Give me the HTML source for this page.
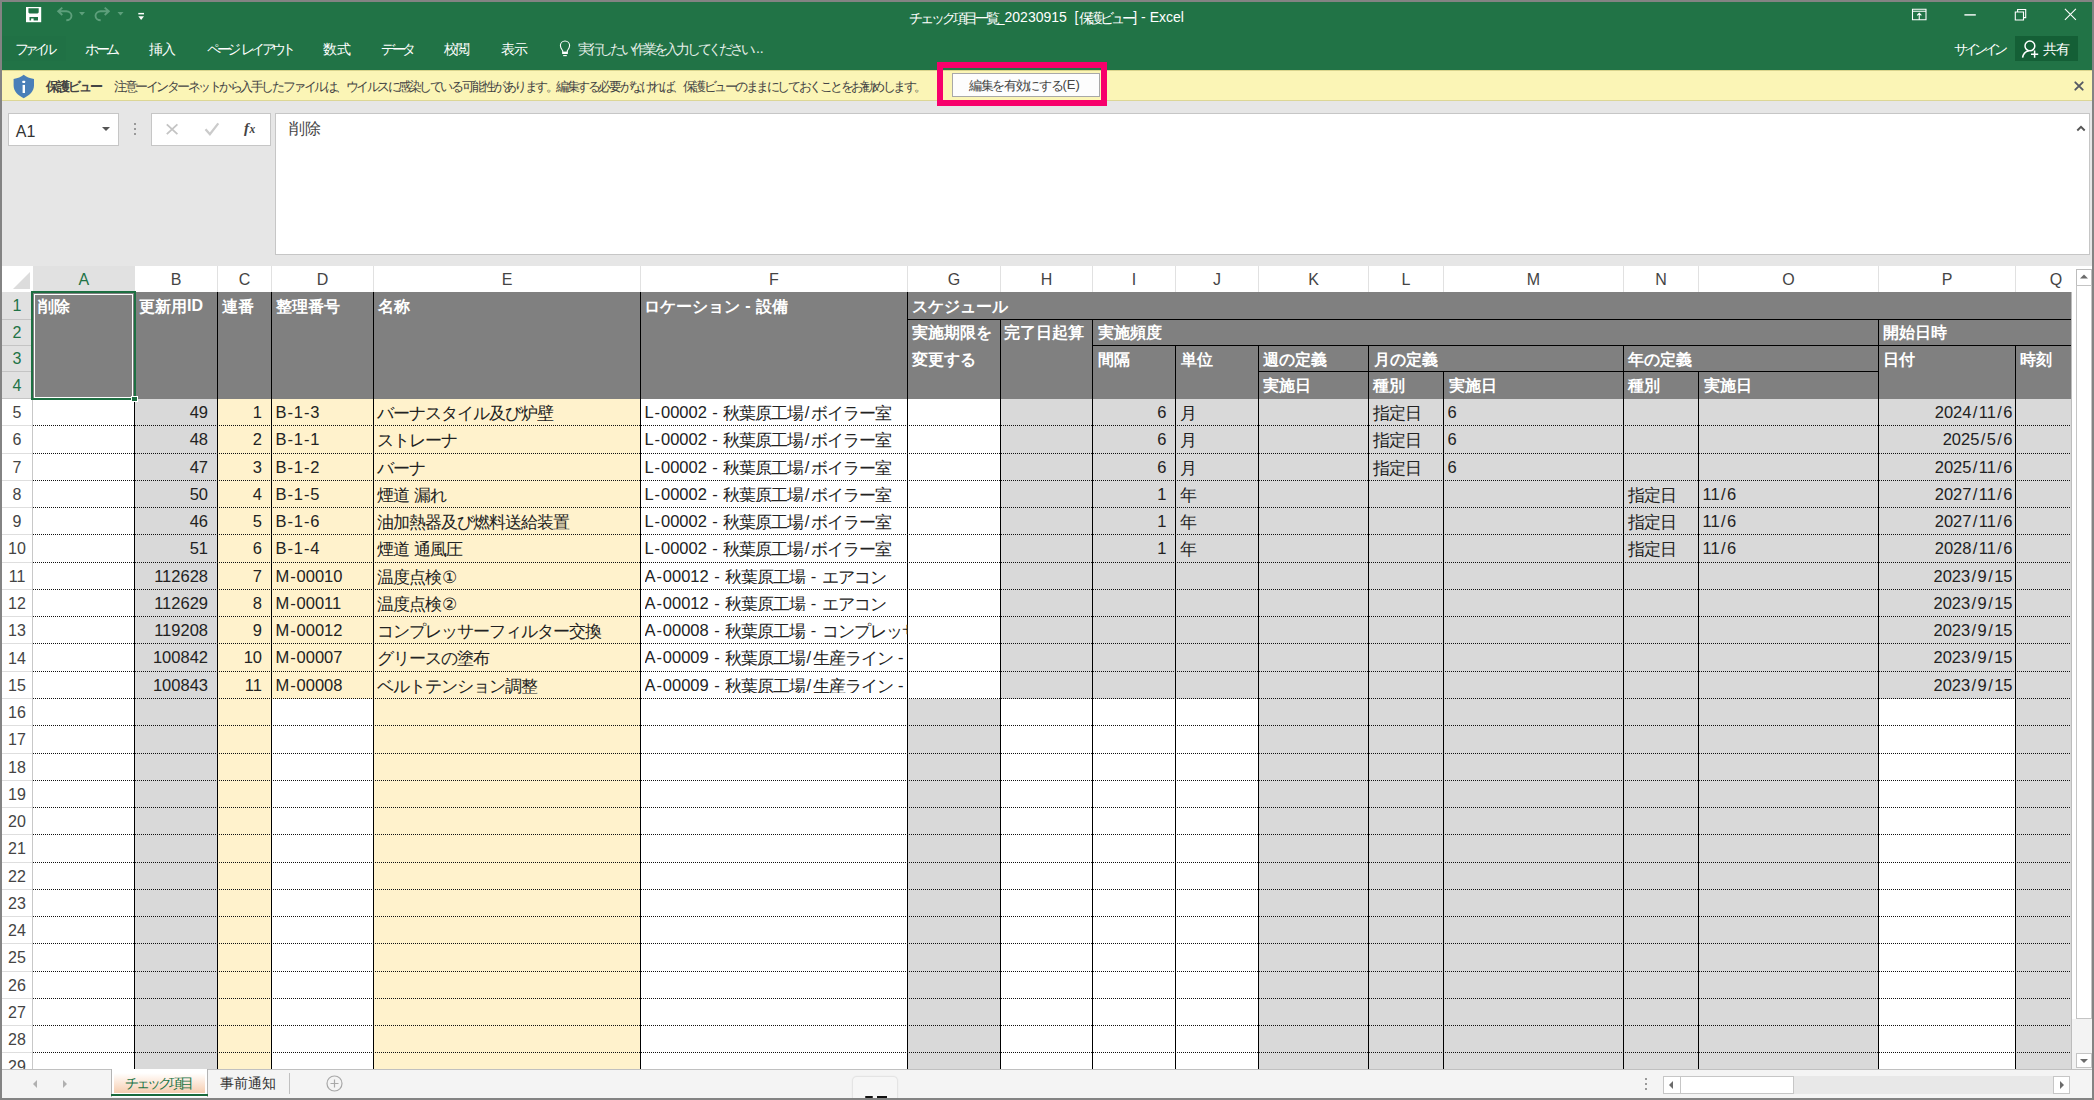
<!DOCTYPE html><html><head><meta charset="utf-8"><style>
html,body{margin:0;padding:0}
body{width:2094px;height:1100px;position:relative;overflow:hidden;background:#838383;font-family:"Liberation Sans", sans-serif}
div{position:absolute;box-sizing:border-box}
.t{white-space:nowrap;line-height:1}
c{display:inline-block;width:var(--cw);text-align:center;position:relative;top:0.06em}
.tofu c{transform:scale(var(--sx),1.18);-webkit-text-stroke:0.3px}
.h{padding:0 0.9px}
.s{padding:0 1.4px}
svg{position:absolute}

</style></head><body>
<div style="left:2px;top:2px;width:2090px;height:68px;background:#217346"></div>
<svg style="left:20px;top:2px" width="130" height="28" viewBox="0 0 130 28">
<rect x="6" y="5" width="15.2" height="15.2" fill="#fff"/>
<path d="M8.4 6.2H18.7V10.4L17.6 11.4H9.5L8.4 10.4Z" fill="#217346"/>
<path d="M9.5 14.9H18V18.6H13.6V16.6H11.1V18.6H9.5Z" fill="#217346"/>
<path d="M42.3 5.6L38.2 9.3L42.3 13 M38.8 9.3H46.3A5.2 4.5 0 0 1 46.3 18.3" fill="none" stroke="#5d9f7b" stroke-width="1.9"/>
<path d="M59 10H65L62 13.4Z" fill="#5d9f7b"/>
<path d="M84.7 5.6L88.8 9.3L84.7 13 M88.2 9.3H80.7A5.2 4.5 0 0 0 80.7 18.3" fill="none" stroke="#5d9f7b" stroke-width="1.9"/>
<path d="M97.5 10H103.5L100.5 13.4Z" fill="#5d9f7b"/>
<rect x="118.3" y="10.9" width="5.7" height="1.5" fill="#fff"/>
<path d="M118.3 14.2H124L121.15 17.9Z" fill="#fff"/>
</svg>
<div class="t" style="left:909.00px;top:9.96px;font-size:14px;color:#fff;--cw:10.976px;--sx:1.21;"><c>チ</c><c>ェ</c><c>ッ</c><c>ク</c><c>項</c><c>目</c><c>一</c><c>覧</c>_20230915  [<c>保</c><c>護</c><c>ビ</c><c>ュ</c><c>ー</c>] - Excel</div>
<svg style="left:1900px;top:0px" width="190" height="30" viewBox="0 0 190 30"><path d="M12.5 9.3h13.5v10.4h-13.5z M12.5 11.2h13.5 M19.25 19.7v-6.3 M17.1 15.4l2.15-2.1 2.15 2.1" fill="none" stroke="#fff" stroke-width="1.1"/><path d="M64.4 14.9h11.4" stroke="#fff" stroke-width="1.4"/><path d="M115.3 12h8.2v8h-8.2z M117.6 12v-2.5h8.1v8.1h-2.2" fill="none" stroke="#fff" stroke-width="1.1"/><path d="M164.9 8.9l11 11 M175.9 8.9l-11 11" stroke="#fff" stroke-width="1.1"/></svg>
<div style="left:2px;top:36px;width:64px;height:25px;background:#207145"></div>
<div class="t" style="left:15.00px;top:40.95px;font-size:14px;color:#fff;--cw:9.250px;--sx:1.02;"><c>フ</c><c>ァ</c><c>イ</c><c>ル</c></div>
<div class="t" style="left:85.00px;top:40.95px;font-size:14px;color:#fff;--cw:10.667px;--sx:1.18;"><c>ホ</c><c>ー</c><c>ム</c></div>
<div class="t" style="left:149.00px;top:40.95px;font-size:14px;color:#fff;--cw:13.000px;--sx:1.44;"><c>挿</c><c>入</c></div>
<div class="t" style="left:207.00px;top:40.95px;font-size:14px;color:#fff;--cw:10.139px;--sx:1.12;"><c>ペ</c><c>ー</c><c>ジ</c> <c>レ</c><c>イ</c><c>ア</c><c>ウ</c><c>ト</c></div>
<div class="t" style="left:323.00px;top:40.95px;font-size:14px;color:#fff;--cw:13.500px;--sx:1.49;"><c>数</c><c>式</c></div>
<div class="t" style="left:381.00px;top:40.95px;font-size:14px;color:#fff;--cw:10.667px;--sx:1.18;"><c>デ</c><c>ー</c><c>タ</c></div>
<div class="t" style="left:443.50px;top:40.95px;font-size:14px;color:#fff;--cw:12.750px;--sx:1.41;"><c>校</c><c>閲</c></div>
<div class="t" style="left:501.00px;top:40.95px;font-size:14px;color:#fff;--cw:13.000px;--sx:1.44;"><c>表</c><c>示</c></div>
<svg style="left:557px;top:38px" width="16" height="20" viewBox="0 0 16 20"><path d="M5.7 12.7C4.9 11.5 3.4 10.1 3.4 7.6A4.6 4.6 0 0 1 12.6 7.6C12.6 10.1 11.1 11.5 10.3 12.7V15.4H5.7Z" fill="none" stroke="#fff" stroke-width="1.1"/><rect x="5.7" y="13.6" width="4.6" height="1.9" fill="#fff"/><path d="M6.2 17.6H9.8" stroke="#fff" stroke-width="1.1"/></svg>
<div class="t" style="left:577.60px;top:40.95px;font-size:14px;color:#e6efe9;--cw:10.921px;--sx:1.21;"><c>実</c><c>行</c><c>し</c><c>た</c><c>い</c><c>作</c><c>業</c><c>を</c><c>入</c><c>力</c><c>し</c><c>て</c><c>く</c><c>だ</c><c>さ</c><c>い</c>...</div>
<div class="t" style="left:1953.70px;top:40.95px;font-size:14px;color:#fff;--cw:10.000px;--sx:1.10;"><c>サ</c><c>イ</c><c>ン</c><c>イ</c><c>ン</c></div>
<div style="left:2015px;top:36px;width:63px;height:25px;background:#145f36"></div>
<svg style="left:2020px;top:38px" width="20" height="22" viewBox="0 0 20 22"><circle cx="9.9" cy="7.9" r="4.9" fill="none" stroke="#fff" stroke-width="1.5"/><path d="M2.6 19.6c0.5-3.5 3-6 6.2-6.8" fill="none" stroke="#fff" stroke-width="1.5"/><path d="M14.6 12.6v7.2 M11 16.2h7.2" stroke="#fff" stroke-width="1.5"/></svg>
<div class="t" style="left:2042.80px;top:40.75px;font-size:14px;color:#fff;--cw:13.100px;--sx:1.45;"><c>共</c><c>有</c></div>
<div style="left:2px;top:70px;width:2090px;height:31.2px;background:#fbf5b6;border-top:1px solid #d9d48e;border-bottom:1px solid #dcd696"></div>
<svg style="left:12px;top:74px" width="24" height="26" viewBox="0 0 24 26"><path d="M11.7 0.8C14.5 3 17.5 4.4 22 5V11.5C22 17 17.5 21.5 11.7 24.2C5.9 21.5 1.6 17 1.6 11.5V5C5.9 4.4 8.9 3 11.7 0.8Z" fill="#4a7fb8"/><rect x="10.4" y="6.8" width="2.7" height="2.1" rx="0.5" fill="#fff"/><rect x="10.6" y="10.9" width="2.4" height="8.1" fill="#fff"/></svg>
<div class="t" style="left:46.00px;top:78.97px;font-size:13px;color:#444;font-weight:bold;--cw:11.100px;--sx:1.32;"><c>保</c><c>護</c><c>ビ</c><c>ュ</c><c>ー</c></div>
<div class="t" style="left:114.00px;top:78.97px;font-size:13px;color:#444;--cw:10.532px;--sx:1.25;"><c>注</c><c>意</c><c>ー</c><c>イ</c><c>ン</c><c>タ</c><c>ー</c><c>ネ</c><c>ッ</c><c>ト</c><c>か</c><c>ら</c><c>入</c><c>手</c><c>し</c><c>た</c><c>フ</c><c>ァ</c><c>イ</c><c>ル</c><c>は</c><c>、</c><c>ウ</c><c>イ</c><c>ル</c><c>ス</c><c>に</c><c>感</c><c>染</c><c>し</c><c>て</c><c>い</c><c>る</c><c>可</c><c>能</c><c>性</c><c>が</c><c>あ</c><c>り</c><c>ま</c><c>す</c><c>。</c><c>編</c><c>集</c><c>す</c><c>る</c><c>必</c><c>要</c><c>が</c><c>な</c><c>け</c><c>れ</c><c>ば</c><c>、</c><c>保</c><c>護</c><c>ビ</c><c>ュ</c><c>ー</c><c>の</c><c>ま</c><c>ま</c><c>に</c><c>し</c><c>て</c><c>お</c><c>く</c><c>こ</c><c>と</c><c>を</c><c>お</c><c>勧</c><c>め</c><c>し</c><c>ま</c><c>す</c><c>。</c></div>
<div style="left:952px;top:73px;width:148px;height:24px;background:#fdfdfd;border:1px solid #a8a8a8"></div>
<div class="t" style="left:968.80px;top:78.47px;font-size:13px;color:#444;--cw:11.709px;--sx:1.39;"><c>編</c><c>集</c><c>を</c><c>有</c><c>効</c><c>に</c><c>す</c><c>る</c>(E)</div>
<svg style="left:2073px;top:79.5px" width="12" height="12" viewBox="0 0 12 12"><path d="M2.3 2.3l7.4 7.4 M9.7 2.3l-7.4 7.4" stroke="#555964" stroke-width="1.9" stroke-linecap="round"/></svg>
<div style="left:2px;top:101px;width:2090px;height:165px;background:#e6e6e6"></div>
<div style="left:8px;top:112.7px;width:111px;height:33.5px;background:#fff;border:1px solid #c6c6c6"></div>
<div class="t" style="left:15.80px;top:123.82px;font-size:16px;color:#333;--cw:16.000px;--sx:1.55;">A1</div>
<svg style="left:100px;top:125px" width="12" height="8" viewBox="0 0 12 8"><path d="M2 2h8l-4 4z" fill="#555"/></svg>
<div style="left:134px;top:123px;width:2px;height:2px;background:#999"></div>
<div style="left:134px;top:128px;width:2px;height:2px;background:#999"></div>
<div style="left:134px;top:133px;width:2px;height:2px;background:#999"></div>
<div style="left:151px;top:112.7px;width:120px;height:33.5px;background:#fff;border:1px solid #c6c6c6"></div>
<svg style="left:160px;top:118px" width="64" height="22" viewBox="0 0 64 22"><path d="M6.8 6.3l10.6 9.9 M17.4 6.3l-10.6 9.9" stroke="#c4c4c4" stroke-width="1.8"/><path d="M45.5 11.3l4.4 4.9 8.4-10.8" fill="none" stroke="#cbcbcb" stroke-width="2.3"/></svg>
<div class="t" style="left:244px;top:120.5px;color:#444;font-size:15px;font-family:'Liberation Serif',serif;font-weight:bold;font-style:italic">f</div>
<div class="t" style="left:249.6px;top:124px;color:#444;font-size:11.5px;font-family:'Liberation Serif',serif;font-weight:bold;font-style:italic">x</div>
<div style="left:275px;top:113px;width:1815px;height:141.5px;background:#fff;border:1px solid #c6c6c6"></div>
<div class="t" style="left:289.00px;top:120.12px;font-size:16px;color:#444;--cw:16.000px;--sx:1.55;"><c>削</c><c>除</c></div>
<div style="left:937px;top:62px;width:170px;height:44px;border:6px solid #f7006b"></div>
<svg style="left:2074px;top:122px" width="14" height="12" viewBox="0 0 14 12"><path d="M3.3 8.5l3.7-3.7 3.7 3.7" fill="none" stroke="#555" stroke-width="1.9"/></svg>
<div style="left:2px;top:266px;width:2070px;height:26px;background:#fff"></div>
<div style="left:2px;top:292px;width:31px;height:1px;background:#c6c6c6"></div>
<div style="left:33px;top:291.5px;width:2039px;height:1px;background:#ababab"></div>
<svg style="left:2px;top:266px" width="31" height="26" viewBox="0 0 31 26"><path d="M28 6v17H11z" fill="#dcdcdc"/></svg>
<div style="left:33px;top:266px;width:101.5px;height:26px;background:#e1e1e1"></div>
<div style="left:133.5px;top:266px;width:1px;height:26px;background:#e1e1e1"></div>
<div class="t" style="left:63.75px;top:271.6px;width:40px;text-align:center;font-size:16px;color:#217346">A</div>
<div style="left:216.5px;top:266px;width:1px;height:26px;background:#e1e1e1"></div>
<div class="t" style="left:156.0px;top:271.6px;width:40px;text-align:center;font-size:16px;color:#444">B</div>
<div style="left:270.5px;top:266px;width:1px;height:26px;background:#e1e1e1"></div>
<div class="t" style="left:224.5px;top:271.6px;width:40px;text-align:center;font-size:16px;color:#444">C</div>
<div style="left:372.5px;top:266px;width:1px;height:26px;background:#e1e1e1"></div>
<div class="t" style="left:302.5px;top:271.6px;width:40px;text-align:center;font-size:16px;color:#444">D</div>
<div style="left:639.5px;top:266px;width:1px;height:26px;background:#e1e1e1"></div>
<div class="t" style="left:487.0px;top:271.6px;width:40px;text-align:center;font-size:16px;color:#444">E</div>
<div style="left:906.5px;top:266px;width:1px;height:26px;background:#e1e1e1"></div>
<div class="t" style="left:754.0px;top:271.6px;width:40px;text-align:center;font-size:16px;color:#444">F</div>
<div style="left:999.5px;top:266px;width:1px;height:26px;background:#e1e1e1"></div>
<div class="t" style="left:934.0px;top:271.6px;width:40px;text-align:center;font-size:16px;color:#444">G</div>
<div style="left:1091.5px;top:266px;width:1px;height:26px;background:#e1e1e1"></div>
<div class="t" style="left:1026.5px;top:271.6px;width:40px;text-align:center;font-size:16px;color:#444">H</div>
<div style="left:1174.5px;top:266px;width:1px;height:26px;background:#e1e1e1"></div>
<div class="t" style="left:1114.0px;top:271.6px;width:40px;text-align:center;font-size:16px;color:#444">I</div>
<div style="left:1257.5px;top:266px;width:1px;height:26px;background:#e1e1e1"></div>
<div class="t" style="left:1197.0px;top:271.6px;width:40px;text-align:center;font-size:16px;color:#444">J</div>
<div style="left:1367.5px;top:266px;width:1px;height:26px;background:#e1e1e1"></div>
<div class="t" style="left:1293.5px;top:271.6px;width:40px;text-align:center;font-size:16px;color:#444">K</div>
<div style="left:1442.5px;top:266px;width:1px;height:26px;background:#e1e1e1"></div>
<div class="t" style="left:1386.0px;top:271.6px;width:40px;text-align:center;font-size:16px;color:#444">L</div>
<div style="left:1622.5px;top:266px;width:1px;height:26px;background:#e1e1e1"></div>
<div class="t" style="left:1513.5px;top:271.6px;width:40px;text-align:center;font-size:16px;color:#444">M</div>
<div style="left:1697.5px;top:266px;width:1px;height:26px;background:#e1e1e1"></div>
<div class="t" style="left:1641.0px;top:271.6px;width:40px;text-align:center;font-size:16px;color:#444">N</div>
<div style="left:1877.5px;top:266px;width:1px;height:26px;background:#e1e1e1"></div>
<div class="t" style="left:1768.5px;top:271.6px;width:40px;text-align:center;font-size:16px;color:#444">O</div>
<div style="left:2014.5px;top:266px;width:1px;height:26px;background:#e1e1e1"></div>
<div class="t" style="left:1927.0px;top:271.6px;width:40px;text-align:center;font-size:16px;color:#444">P</div>
<div class="t" style="left:2036px;top:271.6px;width:40px;text-align:center;font-size:16px;color:#444">Q</div>
<div style="left:2px;top:292px;width:31px;height:777px;background:#fff"></div>
<div style="left:32px;top:292px;width:1px;height:777px;background:#c8c8c8"></div>
<div style="left:2px;top:292px;width:30px;height:106.60000000000002px;background:#e1e1e1"></div>
<div style="left:2px;top:318.5px;width:30px;height:1px;background:#c4c4c4"></div>
<div class="t" style="left:2px;top:298.40px;width:30px;text-align:center;font-size:16px;color:#217346">1</div>
<div style="left:2px;top:345.0px;width:30px;height:1px;background:#c4c4c4"></div>
<div class="t" style="left:2px;top:325.15px;width:30px;text-align:center;font-size:16px;color:#217346">2</div>
<div style="left:2px;top:370.7px;width:30px;height:1px;background:#c4c4c4"></div>
<div class="t" style="left:2px;top:351.25px;width:30px;text-align:center;font-size:16px;color:#217346">3</div>
<div style="left:2px;top:398.1px;width:30px;height:1px;background:#c4c4c4"></div>
<div class="t" style="left:2px;top:377.80px;width:30px;text-align:center;font-size:16px;color:#217346">4</div>
<div style="left:2px;top:425.365px;width:30px;height:1px;background:#dedede"></div>
<div class="t" style="left:2px;top:405.13px;width:30px;text-align:center;font-size:16px;color:#444">5</div>
<div style="left:2px;top:452.63px;width:30px;height:1px;background:#dedede"></div>
<div class="t" style="left:2px;top:432.40px;width:30px;text-align:center;font-size:16px;color:#444">6</div>
<div style="left:2px;top:479.89500000000004px;width:30px;height:1px;background:#dedede"></div>
<div class="t" style="left:2px;top:459.66px;width:30px;text-align:center;font-size:16px;color:#444">7</div>
<div style="left:2px;top:507.16px;width:30px;height:1px;background:#dedede"></div>
<div class="t" style="left:2px;top:486.93px;width:30px;text-align:center;font-size:16px;color:#444">8</div>
<div style="left:2px;top:534.425px;width:30px;height:1px;background:#dedede"></div>
<div class="t" style="left:2px;top:514.19px;width:30px;text-align:center;font-size:16px;color:#444">9</div>
<div style="left:2px;top:561.69px;width:30px;height:1px;background:#dedede"></div>
<div class="t" style="left:2px;top:541.46px;width:30px;text-align:center;font-size:16px;color:#444">10</div>
<div style="left:2px;top:588.955px;width:30px;height:1px;background:#dedede"></div>
<div class="t" style="left:2px;top:568.72px;width:30px;text-align:center;font-size:16px;color:#444">11</div>
<div style="left:2px;top:616.22px;width:30px;height:1px;background:#dedede"></div>
<div class="t" style="left:2px;top:595.99px;width:30px;text-align:center;font-size:16px;color:#444">12</div>
<div style="left:2px;top:643.485px;width:30px;height:1px;background:#dedede"></div>
<div class="t" style="left:2px;top:623.25px;width:30px;text-align:center;font-size:16px;color:#444">13</div>
<div style="left:2px;top:670.75px;width:30px;height:1px;background:#dedede"></div>
<div class="t" style="left:2px;top:650.52px;width:30px;text-align:center;font-size:16px;color:#444">14</div>
<div style="left:2px;top:698.0150000000001px;width:30px;height:1px;background:#dedede"></div>
<div class="t" style="left:2px;top:677.78px;width:30px;text-align:center;font-size:16px;color:#444">15</div>
<div style="left:2px;top:725.28px;width:30px;height:1px;background:#dedede"></div>
<div class="t" style="left:2px;top:705.05px;width:30px;text-align:center;font-size:16px;color:#444">16</div>
<div style="left:2px;top:752.5450000000001px;width:30px;height:1px;background:#dedede"></div>
<div class="t" style="left:2px;top:732.31px;width:30px;text-align:center;font-size:16px;color:#444">17</div>
<div style="left:2px;top:779.8100000000001px;width:30px;height:1px;background:#dedede"></div>
<div class="t" style="left:2px;top:759.58px;width:30px;text-align:center;font-size:16px;color:#444">18</div>
<div style="left:2px;top:807.075px;width:30px;height:1px;background:#dedede"></div>
<div class="t" style="left:2px;top:786.84px;width:30px;text-align:center;font-size:16px;color:#444">19</div>
<div style="left:2px;top:834.34px;width:30px;height:1px;background:#dedede"></div>
<div class="t" style="left:2px;top:814.11px;width:30px;text-align:center;font-size:16px;color:#444">20</div>
<div style="left:2px;top:861.605px;width:30px;height:1px;background:#dedede"></div>
<div class="t" style="left:2px;top:841.37px;width:30px;text-align:center;font-size:16px;color:#444">21</div>
<div style="left:2px;top:888.87px;width:30px;height:1px;background:#dedede"></div>
<div class="t" style="left:2px;top:868.64px;width:30px;text-align:center;font-size:16px;color:#444">22</div>
<div style="left:2px;top:916.135px;width:30px;height:1px;background:#dedede"></div>
<div class="t" style="left:2px;top:895.90px;width:30px;text-align:center;font-size:16px;color:#444">23</div>
<div style="left:2px;top:943.4px;width:30px;height:1px;background:#dedede"></div>
<div class="t" style="left:2px;top:923.17px;width:30px;text-align:center;font-size:16px;color:#444">24</div>
<div style="left:2px;top:970.6650000000001px;width:30px;height:1px;background:#dedede"></div>
<div class="t" style="left:2px;top:950.43px;width:30px;text-align:center;font-size:16px;color:#444">25</div>
<div style="left:2px;top:997.9300000000001px;width:30px;height:1px;background:#dedede"></div>
<div class="t" style="left:2px;top:977.70px;width:30px;text-align:center;font-size:16px;color:#444">26</div>
<div style="left:2px;top:1025.1950000000002px;width:30px;height:1px;background:#dedede"></div>
<div class="t" style="left:2px;top:1004.96px;width:30px;text-align:center;font-size:16px;color:#444">27</div>
<div style="left:2px;top:1052.46px;width:30px;height:1px;background:#dedede"></div>
<div class="t" style="left:2px;top:1032.23px;width:30px;text-align:center;font-size:16px;color:#444">28</div>
<div class="t" style="left:2px;top:1059.49px;width:30px;text-align:center;font-size:16px;color:#444">29</div>
<div style="left:33px;top:292px;width:2039px;height:106.60000000000002px;background:#808080"></div>
<div style="left:33px;top:398.6px;width:101.5px;height:299.9150000000001px;background:#fff"></div>
<div style="left:33px;top:698.5150000000001px;width:101.5px;height:370.4849999999999px;background:#fff"></div>
<div style="left:134.5px;top:398.6px;width:83.0px;height:299.9150000000001px;background:#d9d9d9"></div>
<div style="left:134.5px;top:698.5150000000001px;width:83.0px;height:370.4849999999999px;background:#d9d9d9"></div>
<div style="left:217.5px;top:398.6px;width:54.0px;height:299.9150000000001px;background:#fff2cc"></div>
<div style="left:217.5px;top:698.5150000000001px;width:54.0px;height:370.4849999999999px;background:#fff2cc"></div>
<div style="left:271.5px;top:398.6px;width:102.0px;height:299.9150000000001px;background:#fff2cc"></div>
<div style="left:271.5px;top:698.5150000000001px;width:102.0px;height:370.4849999999999px;background:#fff"></div>
<div style="left:373.5px;top:398.6px;width:267.0px;height:299.9150000000001px;background:#fff2cc"></div>
<div style="left:373.5px;top:698.5150000000001px;width:267.0px;height:370.4849999999999px;background:#fff2cc"></div>
<div style="left:640.5px;top:398.6px;width:267.0px;height:299.9150000000001px;background:#fff"></div>
<div style="left:640.5px;top:698.5150000000001px;width:267.0px;height:370.4849999999999px;background:#fff"></div>
<div style="left:907.5px;top:398.6px;width:93.0px;height:299.9150000000001px;background:#fff"></div>
<div style="left:907.5px;top:698.5150000000001px;width:93.0px;height:370.4849999999999px;background:#d9d9d9"></div>
<div style="left:1000.5px;top:398.6px;width:92.0px;height:299.9150000000001px;background:#d9d9d9"></div>
<div style="left:1000.5px;top:698.5150000000001px;width:92.0px;height:370.4849999999999px;background:#fff"></div>
<div style="left:1092.5px;top:398.6px;width:83.0px;height:299.9150000000001px;background:#d9d9d9"></div>
<div style="left:1092.5px;top:698.5150000000001px;width:83.0px;height:370.4849999999999px;background:#fff"></div>
<div style="left:1175.5px;top:398.6px;width:83.0px;height:299.9150000000001px;background:#d9d9d9"></div>
<div style="left:1175.5px;top:698.5150000000001px;width:83.0px;height:370.4849999999999px;background:#fff"></div>
<div style="left:1258.5px;top:398.6px;width:110.0px;height:299.9150000000001px;background:#d9d9d9"></div>
<div style="left:1258.5px;top:698.5150000000001px;width:110.0px;height:370.4849999999999px;background:#d9d9d9"></div>
<div style="left:1368.5px;top:398.6px;width:75.0px;height:299.9150000000001px;background:#d9d9d9"></div>
<div style="left:1368.5px;top:698.5150000000001px;width:75.0px;height:370.4849999999999px;background:#d9d9d9"></div>
<div style="left:1443.5px;top:398.6px;width:180.0px;height:299.9150000000001px;background:#d9d9d9"></div>
<div style="left:1443.5px;top:698.5150000000001px;width:180.0px;height:370.4849999999999px;background:#d9d9d9"></div>
<div style="left:1623.5px;top:398.6px;width:75.0px;height:299.9150000000001px;background:#d9d9d9"></div>
<div style="left:1623.5px;top:698.5150000000001px;width:75.0px;height:370.4849999999999px;background:#d9d9d9"></div>
<div style="left:1698.5px;top:398.6px;width:180.0px;height:299.9150000000001px;background:#d9d9d9"></div>
<div style="left:1698.5px;top:698.5150000000001px;width:180.0px;height:370.4849999999999px;background:#d9d9d9"></div>
<div style="left:1878.5px;top:398.6px;width:137.0px;height:299.9150000000001px;background:#d9d9d9"></div>
<div style="left:1878.5px;top:698.5150000000001px;width:137.0px;height:370.4849999999999px;background:#fff"></div>
<div style="left:2015.5px;top:398.6px;width:56.5px;height:299.9150000000001px;background:#d9d9d9"></div>
<div style="left:2015.5px;top:698.5150000000001px;width:56.5px;height:370.4849999999999px;background:#d9d9d9"></div>
<div style="left:33px;top:425.365px;width:2039px;height:1px;background:repeating-linear-gradient(90deg,#111 0 1px,transparent 1px 2px)"></div>
<div style="left:33px;top:452.63px;width:2039px;height:1px;background:repeating-linear-gradient(90deg,#111 0 1px,transparent 1px 2px)"></div>
<div style="left:33px;top:479.89500000000004px;width:2039px;height:1px;background:repeating-linear-gradient(90deg,#111 0 1px,transparent 1px 2px)"></div>
<div style="left:33px;top:507.16px;width:2039px;height:1px;background:repeating-linear-gradient(90deg,#111 0 1px,transparent 1px 2px)"></div>
<div style="left:33px;top:534.425px;width:2039px;height:1px;background:repeating-linear-gradient(90deg,#111 0 1px,transparent 1px 2px)"></div>
<div style="left:33px;top:561.69px;width:2039px;height:1px;background:repeating-linear-gradient(90deg,#111 0 1px,transparent 1px 2px)"></div>
<div style="left:33px;top:588.955px;width:2039px;height:1px;background:repeating-linear-gradient(90deg,#111 0 1px,transparent 1px 2px)"></div>
<div style="left:33px;top:616.22px;width:2039px;height:1px;background:repeating-linear-gradient(90deg,#111 0 1px,transparent 1px 2px)"></div>
<div style="left:33px;top:643.485px;width:2039px;height:1px;background:repeating-linear-gradient(90deg,#111 0 1px,transparent 1px 2px)"></div>
<div style="left:33px;top:670.75px;width:2039px;height:1px;background:repeating-linear-gradient(90deg,#111 0 1px,transparent 1px 2px)"></div>
<div style="left:33px;top:698.0150000000001px;width:2039px;height:1px;background:repeating-linear-gradient(90deg,#111 0 1px,transparent 1px 2px)"></div>
<div style="left:33px;top:725.28px;width:2039px;height:1px;background:repeating-linear-gradient(90deg,#111 0 1px,transparent 1px 2px)"></div>
<div style="left:33px;top:752.5450000000001px;width:2039px;height:1px;background:repeating-linear-gradient(90deg,#111 0 1px,transparent 1px 2px)"></div>
<div style="left:33px;top:779.8100000000001px;width:2039px;height:1px;background:repeating-linear-gradient(90deg,#111 0 1px,transparent 1px 2px)"></div>
<div style="left:33px;top:807.075px;width:2039px;height:1px;background:repeating-linear-gradient(90deg,#111 0 1px,transparent 1px 2px)"></div>
<div style="left:33px;top:834.34px;width:2039px;height:1px;background:repeating-linear-gradient(90deg,#111 0 1px,transparent 1px 2px)"></div>
<div style="left:33px;top:861.605px;width:2039px;height:1px;background:repeating-linear-gradient(90deg,#111 0 1px,transparent 1px 2px)"></div>
<div style="left:33px;top:888.87px;width:2039px;height:1px;background:repeating-linear-gradient(90deg,#111 0 1px,transparent 1px 2px)"></div>
<div style="left:33px;top:916.135px;width:2039px;height:1px;background:repeating-linear-gradient(90deg,#111 0 1px,transparent 1px 2px)"></div>
<div style="left:33px;top:943.4px;width:2039px;height:1px;background:repeating-linear-gradient(90deg,#111 0 1px,transparent 1px 2px)"></div>
<div style="left:33px;top:970.6650000000001px;width:2039px;height:1px;background:repeating-linear-gradient(90deg,#111 0 1px,transparent 1px 2px)"></div>
<div style="left:33px;top:997.9300000000001px;width:2039px;height:1px;background:repeating-linear-gradient(90deg,#111 0 1px,transparent 1px 2px)"></div>
<div style="left:33px;top:1025.1950000000002px;width:2039px;height:1px;background:repeating-linear-gradient(90deg,#111 0 1px,transparent 1px 2px)"></div>
<div style="left:33px;top:1052.46px;width:2039px;height:1px;background:repeating-linear-gradient(90deg,#111 0 1px,transparent 1px 2px)"></div>
<div style="left:134.0px;top:398.6px;width:1px;height:670.4px;background:#000"></div>
<div style="left:217.0px;top:398.6px;width:1px;height:670.4px;background:#000"></div>
<div style="left:271.0px;top:398.6px;width:1px;height:670.4px;background:#000"></div>
<div style="left:373.0px;top:398.6px;width:1px;height:670.4px;background:#000"></div>
<div style="left:640.0px;top:398.6px;width:1px;height:670.4px;background:#000"></div>
<div style="left:907.0px;top:398.6px;width:1px;height:670.4px;background:#000"></div>
<div style="left:1000.0px;top:398.6px;width:1px;height:670.4px;background:#000"></div>
<div style="left:1092.0px;top:398.6px;width:1px;height:670.4px;background:#000"></div>
<div style="left:1175.0px;top:398.6px;width:1px;height:670.4px;background:#000"></div>
<div style="left:1258.0px;top:398.6px;width:1px;height:670.4px;background:#000"></div>
<div style="left:1368.0px;top:398.6px;width:1px;height:670.4px;background:#000"></div>
<div style="left:1443.0px;top:398.6px;width:1px;height:670.4px;background:#000"></div>
<div style="left:1623.0px;top:398.6px;width:1px;height:670.4px;background:#000"></div>
<div style="left:1698.0px;top:398.6px;width:1px;height:670.4px;background:#000"></div>
<div style="left:1878.0px;top:398.6px;width:1px;height:670.4px;background:#000"></div>
<div style="left:2015.0px;top:398.6px;width:1px;height:670.4px;background:#000"></div>
<div style="left:217.0px;top:292px;width:1px;height:106.60000000000002px;background:#000"></div>
<div style="left:271.0px;top:292px;width:1px;height:106.60000000000002px;background:#000"></div>
<div style="left:373.0px;top:292px;width:1px;height:106.60000000000002px;background:#000"></div>
<div style="left:640.0px;top:292px;width:1px;height:106.60000000000002px;background:#000"></div>
<div style="left:907.0px;top:292px;width:1px;height:106.60000000000002px;background:#000"></div>
<div style="left:1000.0px;top:319px;width:1px;height:79.60000000000002px;background:#000"></div>
<div style="left:1092.0px;top:319px;width:1px;height:79.60000000000002px;background:#000"></div>
<div style="left:1175.0px;top:345.5px;width:1px;height:53.10000000000002px;background:#000"></div>
<div style="left:1258.0px;top:345.5px;width:1px;height:53.10000000000002px;background:#000"></div>
<div style="left:1368.0px;top:345.5px;width:1px;height:53.10000000000002px;background:#000"></div>
<div style="left:1443.0px;top:371.2px;width:1px;height:27.400000000000034px;background:#000"></div>
<div style="left:1623.0px;top:345.5px;width:1px;height:53.10000000000002px;background:#000"></div>
<div style="left:1698.0px;top:371.2px;width:1px;height:27.400000000000034px;background:#000"></div>
<div style="left:1878.0px;top:319px;width:1px;height:79.60000000000002px;background:#000"></div>
<div style="left:2015.0px;top:345.5px;width:1px;height:53.10000000000002px;background:#000"></div>
<div style="left:907.5px;top:318.5px;width:1164.5px;height:1px;background:#000"></div>
<div style="left:1092.5px;top:345.0px;width:979.5px;height:1px;background:#000"></div>
<div style="left:1258.5px;top:370.7px;width:620.0px;height:1px;background:#000"></div>
<div class="t" style="left:37.70px;top:298.12px;font-size:16px;color:#fff;font-weight:bold;--cw:16.000px;--sx:1.55;"><c>削</c><c>除</c></div>
<div class="t" style="left:139.00px;top:298.12px;font-size:16px;color:#fff;font-weight:bold;--cw:16.000px;--sx:1.55;"><c>更</c><c>新</c><c>用</c>ID</div>
<div class="t" style="left:221.60px;top:298.12px;font-size:16px;color:#fff;font-weight:bold;--cw:16.000px;--sx:1.55;"><c>連</c><c>番</c></div>
<div class="t" style="left:276.40px;top:298.12px;font-size:16px;color:#fff;font-weight:bold;--cw:16.000px;--sx:1.55;"><c>整</c><c>理</c><c>番</c><c>号</c></div>
<div class="t" style="left:377.50px;top:298.12px;font-size:16px;color:#fff;font-weight:bold;--cw:16.000px;--sx:1.55;"><c>名</c><c>称</c></div>
<div class="t" style="left:644.00px;top:298.12px;font-size:16px;color:#fff;font-weight:bold;--cw:16.000px;--sx:1.55;"><c>ロ</c><c>ケ</c><c>ー</c><c>シ</c><c>ョ</c><c>ン</c> <span class="h">-</span> <c>設</c><c>備</c></div>
<div class="t" style="left:912.00px;top:298.12px;font-size:16px;color:#fff;font-weight:bold;--cw:16.000px;--sx:1.55;"><c>ス</c><c>ケ</c><c>ジ</c><c>ュ</c><c>ー</c><c>ル</c></div>
<div class="t" style="left:912.00px;top:324.12px;font-size:16px;color:#fff;font-weight:bold;--cw:16.000px;--sx:1.55;"><c>実</c><c>施</c><c>期</c><c>限</c><c>を</c></div>
<div class="t" style="left:912.00px;top:350.62px;font-size:16px;color:#fff;font-weight:bold;--cw:16.000px;--sx:1.55;"><c>変</c><c>更</c><c>す</c><c>る</c></div>
<div class="t" style="left:1003.80px;top:324.12px;font-size:16px;color:#fff;font-weight:bold;--cw:16.000px;--sx:1.55;"><c>完</c><c>了</c><c>日</c><c>起</c><c>算</c></div>
<div class="t" style="left:1097.50px;top:324.12px;font-size:16px;color:#fff;font-weight:bold;--cw:16.000px;--sx:1.55;"><c>実</c><c>施</c><c>頻</c><c>度</c></div>
<div class="t" style="left:1097.50px;top:350.92px;font-size:16px;color:#fff;font-weight:bold;--cw:16.000px;--sx:1.55;"><c>間</c><c>隔</c></div>
<div class="t" style="left:1180.60px;top:350.92px;font-size:16px;color:#fff;font-weight:bold;--cw:16.000px;--sx:1.55;"><c>単</c><c>位</c></div>
<div class="t" style="left:1263.00px;top:350.92px;font-size:16px;color:#fff;font-weight:bold;--cw:16.000px;--sx:1.55;"><c>週</c><c>の</c><c>定</c><c>義</c></div>
<div class="t" style="left:1373.50px;top:350.92px;font-size:16px;color:#fff;font-weight:bold;--cw:16.000px;--sx:1.55;"><c>月</c><c>の</c><c>定</c><c>義</c></div>
<div class="t" style="left:1628.00px;top:350.92px;font-size:16px;color:#fff;font-weight:bold;--cw:16.000px;--sx:1.55;"><c>年</c><c>の</c><c>定</c><c>義</c></div>
<div class="t" style="left:1263.00px;top:376.72px;font-size:16px;color:#fff;font-weight:bold;--cw:16.000px;--sx:1.55;"><c>実</c><c>施</c><c>日</c></div>
<div class="t" style="left:1372.70px;top:376.72px;font-size:16px;color:#fff;font-weight:bold;--cw:16.000px;--sx:1.55;"><c>種</c><c>別</c></div>
<div class="t" style="left:1448.70px;top:376.72px;font-size:16px;color:#fff;font-weight:bold;--cw:16.000px;--sx:1.55;"><c>実</c><c>施</c><c>日</c></div>
<div class="t" style="left:1628.00px;top:376.72px;font-size:16px;color:#fff;font-weight:bold;--cw:16.000px;--sx:1.55;"><c>種</c><c>別</c></div>
<div class="t" style="left:1703.50px;top:376.72px;font-size:16px;color:#fff;font-weight:bold;--cw:16.000px;--sx:1.55;"><c>実</c><c>施</c><c>日</c></div>
<div class="t" style="left:1883.00px;top:324.12px;font-size:16px;color:#fff;font-weight:bold;--cw:16.000px;--sx:1.55;"><c>開</c><c>始</c><c>日</c><c>時</c></div>
<div class="t" style="left:1883.00px;top:350.92px;font-size:16px;color:#fff;font-weight:bold;--cw:16.000px;--sx:1.55;"><c>日</c><c>付</c></div>
<div class="t" style="left:2020.00px;top:350.92px;font-size:16px;color:#fff;font-weight:bold;--cw:16.000px;--sx:1.55;"><c>時</c><c>刻</c></div>
<div style="left:31.3px;top:291.1px;width:104.6px;height:109.2px;border:2.4px solid #1d6f42"></div>
<div style="left:33.7px;top:293.5px;width:99.8px;height:104.4px;border:1.2px solid #fff"></div>
<div style="left:131.3px;top:395.8px;width:6.4px;height:6.4px;background:#1d6f42;border:1px solid #fff"></div>
<div class="t" style="left:-92.00px;width:300px;text-align:right;top:404.06px;font-size:16.5px;color:#222;">49</div>
<div class="t" style="left:-38.00px;width:300px;text-align:right;top:404.06px;font-size:16.5px;color:#222;">1</div>
<div class="t" style="left:275.50px;top:404.06px;font-size:16.5px;color:#222;--cw:16.000px;--sx:1.50;">B<span class="h">-</span>1<span class="h">-</span>3</div>
<div class="t" style="left:377.00px;top:404.06px;font-size:16.5px;color:#222;--cw:16.000px;--sx:1.50;"><c>バ</c><c>ー</c><c>ナ</c><c>ス</c><c>タ</c><c>イ</c><c>ル</c><c>及</c><c>び</c><c>炉</c><c>壁</c></div>
<div class="t" style="left:644.50px;top:404.06px;font-size:16.5px;color:#222;--cw:16.000px;--sx:1.50;width:263.0px;overflow:hidden">L<span class="h">-</span>00002 <span class="h">-</span> <c>秋</c><c>葉</c><c>原</c><c>工</c><c>場</c><span class="s">/</span><c>ボ</c><c>イ</c><c>ラ</c><c>ー</c><c>室</c></div>
<div class="t" style="left:866.50px;width:300px;text-align:right;top:404.06px;font-size:16.5px;color:#222;">6</div>
<div class="t" style="left:1180.00px;top:404.06px;font-size:16.5px;color:#222;--cw:16.000px;--sx:1.50;"><c>月</c></div>
<div class="t" style="left:1372.90px;top:404.06px;font-size:16.5px;color:#222;--cw:16.000px;--sx:1.50;"><c>指</c><c>定</c><c>日</c></div>
<div class="t" style="left:1447.50px;top:404.06px;font-size:16.5px;color:#222;--cw:16.000px;--sx:1.50;">6</div>
<div class="t" style="left:1712.50px;width:300px;text-align:right;top:404.06px;font-size:16.5px;color:#222;">2024<span class="s">/</span>11<span class="s">/</span>6</div>
<div class="t" style="left:-92.00px;width:300px;text-align:right;top:431.33px;font-size:16.5px;color:#222;">48</div>
<div class="t" style="left:-38.00px;width:300px;text-align:right;top:431.33px;font-size:16.5px;color:#222;">2</div>
<div class="t" style="left:275.50px;top:431.33px;font-size:16.5px;color:#222;--cw:16.000px;--sx:1.50;">B<span class="h">-</span>1<span class="h">-</span>1</div>
<div class="t" style="left:377.00px;top:431.33px;font-size:16.5px;color:#222;--cw:16.000px;--sx:1.50;"><c>ス</c><c>ト</c><c>レ</c><c>ー</c><c>ナ</c></div>
<div class="t" style="left:644.50px;top:431.33px;font-size:16.5px;color:#222;--cw:16.000px;--sx:1.50;width:263.0px;overflow:hidden">L<span class="h">-</span>00002 <span class="h">-</span> <c>秋</c><c>葉</c><c>原</c><c>工</c><c>場</c><span class="s">/</span><c>ボ</c><c>イ</c><c>ラ</c><c>ー</c><c>室</c></div>
<div class="t" style="left:866.50px;width:300px;text-align:right;top:431.33px;font-size:16.5px;color:#222;">6</div>
<div class="t" style="left:1180.00px;top:431.33px;font-size:16.5px;color:#222;--cw:16.000px;--sx:1.50;"><c>月</c></div>
<div class="t" style="left:1372.90px;top:431.33px;font-size:16.5px;color:#222;--cw:16.000px;--sx:1.50;"><c>指</c><c>定</c><c>日</c></div>
<div class="t" style="left:1447.50px;top:431.33px;font-size:16.5px;color:#222;--cw:16.000px;--sx:1.50;">6</div>
<div class="t" style="left:1712.50px;width:300px;text-align:right;top:431.33px;font-size:16.5px;color:#222;">2025<span class="s">/</span>5<span class="s">/</span>6</div>
<div class="t" style="left:-92.00px;width:300px;text-align:right;top:458.59px;font-size:16.5px;color:#222;">47</div>
<div class="t" style="left:-38.00px;width:300px;text-align:right;top:458.59px;font-size:16.5px;color:#222;">3</div>
<div class="t" style="left:275.50px;top:458.59px;font-size:16.5px;color:#222;--cw:16.000px;--sx:1.50;">B<span class="h">-</span>1<span class="h">-</span>2</div>
<div class="t" style="left:377.00px;top:458.59px;font-size:16.5px;color:#222;--cw:16.000px;--sx:1.50;"><c>バ</c><c>ー</c><c>ナ</c></div>
<div class="t" style="left:644.50px;top:458.59px;font-size:16.5px;color:#222;--cw:16.000px;--sx:1.50;width:263.0px;overflow:hidden">L<span class="h">-</span>00002 <span class="h">-</span> <c>秋</c><c>葉</c><c>原</c><c>工</c><c>場</c><span class="s">/</span><c>ボ</c><c>イ</c><c>ラ</c><c>ー</c><c>室</c></div>
<div class="t" style="left:866.50px;width:300px;text-align:right;top:458.59px;font-size:16.5px;color:#222;">6</div>
<div class="t" style="left:1180.00px;top:458.59px;font-size:16.5px;color:#222;--cw:16.000px;--sx:1.50;"><c>月</c></div>
<div class="t" style="left:1372.90px;top:458.59px;font-size:16.5px;color:#222;--cw:16.000px;--sx:1.50;"><c>指</c><c>定</c><c>日</c></div>
<div class="t" style="left:1447.50px;top:458.59px;font-size:16.5px;color:#222;--cw:16.000px;--sx:1.50;">6</div>
<div class="t" style="left:1712.50px;width:300px;text-align:right;top:458.59px;font-size:16.5px;color:#222;">2025<span class="s">/</span>11<span class="s">/</span>6</div>
<div class="t" style="left:-92.00px;width:300px;text-align:right;top:485.86px;font-size:16.5px;color:#222;">50</div>
<div class="t" style="left:-38.00px;width:300px;text-align:right;top:485.86px;font-size:16.5px;color:#222;">4</div>
<div class="t" style="left:275.50px;top:485.86px;font-size:16.5px;color:#222;--cw:16.000px;--sx:1.50;">B<span class="h">-</span>1<span class="h">-</span>5</div>
<div class="t" style="left:377.00px;top:485.86px;font-size:16.5px;color:#222;--cw:16.000px;--sx:1.50;"><c>煙</c><c>道</c> <c>漏</c><c>れ</c></div>
<div class="t" style="left:644.50px;top:485.86px;font-size:16.5px;color:#222;--cw:16.000px;--sx:1.50;width:263.0px;overflow:hidden">L<span class="h">-</span>00002 <span class="h">-</span> <c>秋</c><c>葉</c><c>原</c><c>工</c><c>場</c><span class="s">/</span><c>ボ</c><c>イ</c><c>ラ</c><c>ー</c><c>室</c></div>
<div class="t" style="left:866.50px;width:300px;text-align:right;top:485.86px;font-size:16.5px;color:#222;">1</div>
<div class="t" style="left:1180.00px;top:485.86px;font-size:16.5px;color:#222;--cw:16.000px;--sx:1.50;"><c>年</c></div>
<div class="t" style="left:1627.90px;top:485.86px;font-size:16.5px;color:#222;--cw:16.000px;--sx:1.50;"><c>指</c><c>定</c><c>日</c></div>
<div class="t" style="left:1702.50px;top:485.86px;font-size:16.5px;color:#222;--cw:16.000px;--sx:1.50;">11<span class="s">/</span>6</div>
<div class="t" style="left:1712.50px;width:300px;text-align:right;top:485.86px;font-size:16.5px;color:#222;">2027<span class="s">/</span>11<span class="s">/</span>6</div>
<div class="t" style="left:-92.00px;width:300px;text-align:right;top:513.12px;font-size:16.5px;color:#222;">46</div>
<div class="t" style="left:-38.00px;width:300px;text-align:right;top:513.12px;font-size:16.5px;color:#222;">5</div>
<div class="t" style="left:275.50px;top:513.12px;font-size:16.5px;color:#222;--cw:16.000px;--sx:1.50;">B<span class="h">-</span>1<span class="h">-</span>6</div>
<div class="t" style="left:377.00px;top:513.12px;font-size:16.5px;color:#222;--cw:16.000px;--sx:1.50;"><c>油</c><c>加</c><c>熱</c><c>器</c><c>及</c><c>び</c><c>燃</c><c>料</c><c>送</c><c>給</c><c>装</c><c>置</c></div>
<div class="t" style="left:644.50px;top:513.12px;font-size:16.5px;color:#222;--cw:16.000px;--sx:1.50;width:263.0px;overflow:hidden">L<span class="h">-</span>00002 <span class="h">-</span> <c>秋</c><c>葉</c><c>原</c><c>工</c><c>場</c><span class="s">/</span><c>ボ</c><c>イ</c><c>ラ</c><c>ー</c><c>室</c></div>
<div class="t" style="left:866.50px;width:300px;text-align:right;top:513.12px;font-size:16.5px;color:#222;">1</div>
<div class="t" style="left:1180.00px;top:513.12px;font-size:16.5px;color:#222;--cw:16.000px;--sx:1.50;"><c>年</c></div>
<div class="t" style="left:1627.90px;top:513.12px;font-size:16.5px;color:#222;--cw:16.000px;--sx:1.50;"><c>指</c><c>定</c><c>日</c></div>
<div class="t" style="left:1702.50px;top:513.12px;font-size:16.5px;color:#222;--cw:16.000px;--sx:1.50;">11<span class="s">/</span>6</div>
<div class="t" style="left:1712.50px;width:300px;text-align:right;top:513.12px;font-size:16.5px;color:#222;">2027<span class="s">/</span>11<span class="s">/</span>6</div>
<div class="t" style="left:-92.00px;width:300px;text-align:right;top:540.39px;font-size:16.5px;color:#222;">51</div>
<div class="t" style="left:-38.00px;width:300px;text-align:right;top:540.39px;font-size:16.5px;color:#222;">6</div>
<div class="t" style="left:275.50px;top:540.39px;font-size:16.5px;color:#222;--cw:16.000px;--sx:1.50;">B<span class="h">-</span>1<span class="h">-</span>4</div>
<div class="t" style="left:377.00px;top:540.39px;font-size:16.5px;color:#222;--cw:16.000px;--sx:1.50;"><c>煙</c><c>道</c> <c>通</c><c>風</c><c>圧</c></div>
<div class="t" style="left:644.50px;top:540.39px;font-size:16.5px;color:#222;--cw:16.000px;--sx:1.50;width:263.0px;overflow:hidden">L<span class="h">-</span>00002 <span class="h">-</span> <c>秋</c><c>葉</c><c>原</c><c>工</c><c>場</c><span class="s">/</span><c>ボ</c><c>イ</c><c>ラ</c><c>ー</c><c>室</c></div>
<div class="t" style="left:866.50px;width:300px;text-align:right;top:540.39px;font-size:16.5px;color:#222;">1</div>
<div class="t" style="left:1180.00px;top:540.39px;font-size:16.5px;color:#222;--cw:16.000px;--sx:1.50;"><c>年</c></div>
<div class="t" style="left:1627.90px;top:540.39px;font-size:16.5px;color:#222;--cw:16.000px;--sx:1.50;"><c>指</c><c>定</c><c>日</c></div>
<div class="t" style="left:1702.50px;top:540.39px;font-size:16.5px;color:#222;--cw:16.000px;--sx:1.50;">11<span class="s">/</span>6</div>
<div class="t" style="left:1712.50px;width:300px;text-align:right;top:540.39px;font-size:16.5px;color:#222;">2028<span class="s">/</span>11<span class="s">/</span>6</div>
<div class="t" style="left:-92.00px;width:300px;text-align:right;top:567.65px;font-size:16.5px;color:#222;">112628</div>
<div class="t" style="left:-38.00px;width:300px;text-align:right;top:567.65px;font-size:16.5px;color:#222;">7</div>
<div class="t" style="left:275.50px;top:567.65px;font-size:16.5px;color:#222;--cw:16.000px;--sx:1.50;">M<span class="h">-</span>00010</div>
<div class="t" style="left:377.00px;top:567.65px;font-size:16.5px;color:#222;--cw:16.000px;--sx:1.50;"><c>温</c><c>度</c><c>点</c><c>検</c><c style="transform:none">①</c></div>
<div class="t" style="left:644.50px;top:567.65px;font-size:16.5px;color:#222;--cw:16.000px;--sx:1.50;width:263.0px;overflow:hidden">A<span class="h">-</span>00012 <span class="h">-</span> <c>秋</c><c>葉</c><c>原</c><c>工</c><c>場</c> <span class="h">-</span> <c>エ</c><c>ア</c><c>コ</c><c>ン</c></div>
<div class="t" style="left:1712.50px;width:300px;text-align:right;top:567.65px;font-size:16.5px;color:#222;">2023<span class="s">/</span>9<span class="s">/</span>15</div>
<div class="t" style="left:-92.00px;width:300px;text-align:right;top:594.92px;font-size:16.5px;color:#222;">112629</div>
<div class="t" style="left:-38.00px;width:300px;text-align:right;top:594.92px;font-size:16.5px;color:#222;">8</div>
<div class="t" style="left:275.50px;top:594.92px;font-size:16.5px;color:#222;--cw:16.000px;--sx:1.50;">M<span class="h">-</span>00011</div>
<div class="t" style="left:377.00px;top:594.92px;font-size:16.5px;color:#222;--cw:16.000px;--sx:1.50;"><c>温</c><c>度</c><c>点</c><c>検</c><c style="transform:none">②</c></div>
<div class="t" style="left:644.50px;top:594.92px;font-size:16.5px;color:#222;--cw:16.000px;--sx:1.50;width:263.0px;overflow:hidden">A<span class="h">-</span>00012 <span class="h">-</span> <c>秋</c><c>葉</c><c>原</c><c>工</c><c>場</c> <span class="h">-</span> <c>エ</c><c>ア</c><c>コ</c><c>ン</c></div>
<div class="t" style="left:1712.50px;width:300px;text-align:right;top:594.92px;font-size:16.5px;color:#222;">2023<span class="s">/</span>9<span class="s">/</span>15</div>
<div class="t" style="left:-92.00px;width:300px;text-align:right;top:622.18px;font-size:16.5px;color:#222;">119208</div>
<div class="t" style="left:-38.00px;width:300px;text-align:right;top:622.18px;font-size:16.5px;color:#222;">9</div>
<div class="t" style="left:275.50px;top:622.18px;font-size:16.5px;color:#222;--cw:16.000px;--sx:1.50;">M<span class="h">-</span>00012</div>
<div class="t" style="left:377.00px;top:622.18px;font-size:16.5px;color:#222;--cw:16.000px;--sx:1.50;"><c>コ</c><c>ン</c><c>プ</c><c>レ</c><c>ッ</c><c>サ</c><c>ー</c><c>フ</c><c>ィ</c><c>ル</c><c>タ</c><c>ー</c><c>交</c><c>換</c></div>
<div class="t" style="left:644.50px;top:622.18px;font-size:16.5px;color:#222;--cw:16.000px;--sx:1.50;width:263.0px;overflow:hidden">A<span class="h">-</span>00008 <span class="h">-</span> <c>秋</c><c>葉</c><c>原</c><c>工</c><c>場</c> <span class="h">-</span> <c>コ</c><c>ン</c><c>プ</c><c>レ</c><c>ッ</c><c>サ</c><c>ー</c></div>
<div class="t" style="left:1712.50px;width:300px;text-align:right;top:622.18px;font-size:16.5px;color:#222;">2023<span class="s">/</span>9<span class="s">/</span>15</div>
<div class="t" style="left:-92.00px;width:300px;text-align:right;top:649.45px;font-size:16.5px;color:#222;">100842</div>
<div class="t" style="left:-38.00px;width:300px;text-align:right;top:649.45px;font-size:16.5px;color:#222;">10</div>
<div class="t" style="left:275.50px;top:649.45px;font-size:16.5px;color:#222;--cw:16.000px;--sx:1.50;">M<span class="h">-</span>00007</div>
<div class="t" style="left:377.00px;top:649.45px;font-size:16.5px;color:#222;--cw:16.000px;--sx:1.50;"><c>グ</c><c>リ</c><c>ー</c><c>ス</c><c>の</c><c>塗</c><c>布</c></div>
<div class="t" style="left:644.50px;top:649.45px;font-size:16.5px;color:#222;--cw:16.000px;--sx:1.50;width:263.0px;overflow:hidden">A<span class="h">-</span>00009 <span class="h">-</span> <c>秋</c><c>葉</c><c>原</c><c>工</c><c>場</c><span class="s">/</span><c>生</c><c>産</c><c>ラ</c><c>イ</c><c>ン</c> <span class="h">-</span> 1</div>
<div class="t" style="left:1712.50px;width:300px;text-align:right;top:649.45px;font-size:16.5px;color:#222;">2023<span class="s">/</span>9<span class="s">/</span>15</div>
<div class="t" style="left:-92.00px;width:300px;text-align:right;top:676.71px;font-size:16.5px;color:#222;">100843</div>
<div class="t" style="left:-38.00px;width:300px;text-align:right;top:676.71px;font-size:16.5px;color:#222;">11</div>
<div class="t" style="left:275.50px;top:676.71px;font-size:16.5px;color:#222;--cw:16.000px;--sx:1.50;">M<span class="h">-</span>00008</div>
<div class="t" style="left:377.00px;top:676.71px;font-size:16.5px;color:#222;--cw:16.000px;--sx:1.50;"><c>ベ</c><c>ル</c><c>ト</c><c>テ</c><c>ン</c><c>シ</c><c>ョ</c><c>ン</c><c>調</c><c>整</c></div>
<div class="t" style="left:644.50px;top:676.71px;font-size:16.5px;color:#222;--cw:16.000px;--sx:1.50;width:263.0px;overflow:hidden">A<span class="h">-</span>00009 <span class="h">-</span> <c>秋</c><c>葉</c><c>原</c><c>工</c><c>場</c><span class="s">/</span><c>生</c><c>産</c><c>ラ</c><c>イ</c><c>ン</c> <span class="h">-</span> 1</div>
<div class="t" style="left:1712.50px;width:300px;text-align:right;top:676.71px;font-size:16.5px;color:#222;">2023<span class="s">/</span>9<span class="s">/</span>15</div>
<div style="left:2072px;top:266px;width:20px;height:803px;background:#f3f3f3"></div>
<div style="left:2072px;top:266px;width:20px;height:26px;background:#fff"></div>
<div style="left:2072px;top:266px;width:4px;height:753px;background:#fff"></div>
<div style="left:2071px;top:292px;width:1px;height:777px;background:#bcbcbc"></div>
<div style="left:2076px;top:268.5px;width:16px;height:17.5px;background:#fff;border:1px solid #bdbdbd"></div>
<svg style="left:2076px;top:269px" width="16" height="16" viewBox="0 0 16 16"><path d="M4 9.5h8L8 5.5z" fill="#6b6b6b"/></svg>
<div style="left:2076px;top:285px;width:16px;height:734px;background:#fff;border:1px solid #c4c4c4"></div>
<div style="left:2076px;top:1052.7px;width:16px;height:15.5px;background:#fff;border:1px solid #c4c4c4"></div>
<svg style="left:2076px;top:1053px" width="16" height="16" viewBox="0 0 16 16"><path d="M4 6h8L8 10z" fill="#6b6b6b"/></svg>
<div style="left:2px;top:1069px;width:2090px;height:29px;background:#f4f4f4;border-top:1px solid #c0c0c0"></div>
<svg style="left:28px;top:1077px" width="44" height="14" viewBox="0 0 44 14"><path d="M9 3l-4 4 4 4z M35 3l4 4-4 4z" fill="#b0b0b0"/></svg>
<div style="left:111px;top:1069px;width:97px;height:27.5px;background:#fff;border-left:1px solid #b4b4b4;border-right:1px solid #b4b4b4"></div>
<div style="left:114px;top:1073.2px;width:91px;height:19.5px;background:linear-gradient(#fff 0%,#fdeee3 35%,#f6cdb0 100%)"></div>
<div style="left:111px;top:1093.8px;width:97px;height:2px;background:#1a6b3c"></div>
<div class="t" style="left:125.40px;top:1075.36px;font-size:14px;color:#217346;--cw:10.867px;--sx:1.20;"><c>チ</c><c>ェ</c><c>ッ</c><c>ク</c><c>項</c><c>目</c></div>
<div class="t" style="left:220.00px;top:1075.36px;font-size:14px;color:#333;--cw:14.050px;--sx:1.55;"><c>事</c><c>前</c><c>通</c><c>知</c></div>
<div style="left:289px;top:1073px;width:1px;height:21px;background:#c0c0c0"></div>
<svg style="left:325px;top:1074px" width="19" height="19" viewBox="0 0 19 19"><circle cx="9.5" cy="9.5" r="7.5" fill="none" stroke="#a8a8a8" stroke-width="1.2"/><path d="M9.5 5.5v8 M5.5 9.5h8" stroke="#a8a8a8" stroke-width="1.2"/></svg>
<div style="left:852px;top:1076px;width:46px;height:22px;background:#f6f6f6;border:1px solid #e4e4e4;border-bottom:none;border-radius:5px 5px 0 0;box-shadow:0 0 2px rgba(0,0,0,0.06)"></div>
<div style="left:865px;top:1095.5px;width:8px;height:2px;background:#111;border-radius:1px"></div>
<div style="left:877px;top:1096px;width:10px;height:1.6px;background:#111"></div>
<div style="left:1645px;top:1078px;width:2px;height:2px;background:#999"></div>
<div style="left:1645px;top:1083px;width:2px;height:2px;background:#999"></div>
<div style="left:1645px;top:1088px;width:2px;height:2px;background:#999"></div>
<div style="left:1663px;top:1076px;width:407px;height:18px;background:#e8e8e8"></div>
<div style="left:1663px;top:1076px;width:18px;height:18px;background:#fff;border:1px solid #c6c6c6"></div>
<svg style="left:1664px;top:1078px" width="14" height="14" viewBox="0 0 14 14"><path d="M9 3l-4 4 4 4z" fill="#6b6b6b"/></svg>
<div style="left:1680px;top:1076px;width:114px;height:18px;background:#fff;border:1px solid #c6c6c6"></div>
<div style="left:2053px;top:1076px;width:17px;height:18px;background:#fff;border:1px solid #c6c6c6"></div>
<svg style="left:2055px;top:1078px" width="14" height="14" viewBox="0 0 14 14"><path d="M5 3l4 4-4 4z" fill="#6b6b6b"/></svg>
<script>(function(){var s=document.createElement("span");s.style.cssText="position:absolute;left:0;top:0;font:100px 'Liberation Sans';white-space:nowrap;visibility:hidden";s.textContent="\u3042\u3044";document.body.appendChild(s);var w=s.getBoundingClientRect().width;s.parentNode.removeChild(s);if(Math.abs(w-150)<2)document.body.className+=" tofu";})();</script>
</body></html>
